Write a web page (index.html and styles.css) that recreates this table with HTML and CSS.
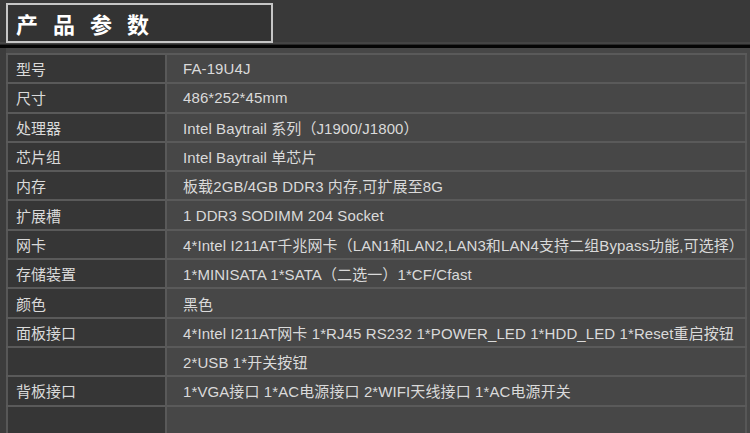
FILE: index.html
```html
<!DOCTYPE html>
<html lang="zh-CN">
<head>
  <meta charset="UTF-8" />
  <meta name="viewport" content="width=device-width, initial-scale=1.0" />
  <title>产品参数</title>
  <link rel="stylesheet" href="styles.css">
</head>
<body>
  <header class="top">
    <h1 class="title">产品参数</h1>
  </header>
  <div class="rule"></div>

  <div class="sheet">
    <table class="spec">
      <tr><td class="key">型号</td><td>FA-19U4J</td></tr>
      <tr><td class="key">尺寸</td><td>486*252*45mm</td></tr>
      <tr><td class="key">处理器</td><td>Intel Baytrail 系列（J1900/J1800）</td></tr>
      <tr><td class="key">芯片组</td><td>Intel Baytrail 单芯片</td></tr>
      <tr><td class="key">内存</td><td>板载2GB/4GB DDR3 内存,可扩展至8G</td></tr>
      <tr><td class="key">扩展槽</td><td>1 DDR3 SODIMM 204 Socket</td></tr>
      <tr><td class="key">网卡</td><td>4*Intel I211AT千兆网卡（LAN1和LAN2,LAN3和LAN4支持二组Bypass功能,可选择）</td></tr>
      <tr><td class="key">存储装置</td><td>1*MINISATA 1*SATA（二选一）1*CF/Cfast</td></tr>
      <tr><td class="key">颜色</td><td>黑色</td></tr>
      <tr><td class="key">面板接口</td><td>4*Intel I211AT网卡 1*RJ45 RS232 1*POWER_LED 1*HDD_LED 1*Reset重启按钮</td></tr>
      <tr><td class="key"></td><td>2*USB 1*开关按钮</td></tr>
      <tr><td class="key">背板接口</td><td>1*VGA接口 1*AC电源接口 2*WIFI天线接口 1*AC电源开关</td></tr>
      <tr class="filler"><td class="key"></td><td></td></tr>
    </table>
  </div>
</body>
</html>
```

FILE: styles.css
```css
body {
  margin: 0;
  padding: 0;
  background-color: #474747;
  font-family: "Liberation Sans", "Noto Sans CJK SC", sans-serif;
  color: #dadada;
  height: 433px;
  overflow: hidden;
}
.top {
  background-color: #393939;
  height: 44px;
  padding: 3px 0 0 6px;
  box-sizing: border-box;
  border-bottom: 2px solid #444;
}
.title {
  margin: 0;
  width: 267px;
  height: 40px;
  box-sizing: border-box;
  border: 2px solid #c6c6c6;
  background-color: #333;
  color: #fff;
  font-family: "Noto Sans CJK SC", sans-serif;
  font-size: 22px;
  font-weight: bold;
  line-height: 36px;
  padding-left: 8px;
  letter-spacing: 15px;
}
.rule {
  height: 3px;
  background-color: #050505;
  border-top: 1px solid #2a2a2a;
}
.sheet {
  padding: 5px 3px 0 6px;
  background: linear-gradient(to right, #3c3c3c 0, #3c3c3c 6px, #474747 6px);
}
.spec {
  width: 100%;
  table-layout: fixed;
  border-collapse: collapse;
  border: 2px solid #575757;
  border-bottom: none;
  font-size: 15px;
}
.spec td {
  height: 27.3px;
  padding: 0 0 0 16px;
  border-top: 2px solid #5a5a5a;
  background-color: #474747;
  white-space: nowrap;
  letter-spacing: 0.1px;
}
.spec td.key {
  width: 149px;
  padding-left: 8px;
  background-color: #363636;
  border-right: 2px solid #595959;
  letter-spacing: 0;
}
.spec .filler td {
  height: 40px;
}
```
